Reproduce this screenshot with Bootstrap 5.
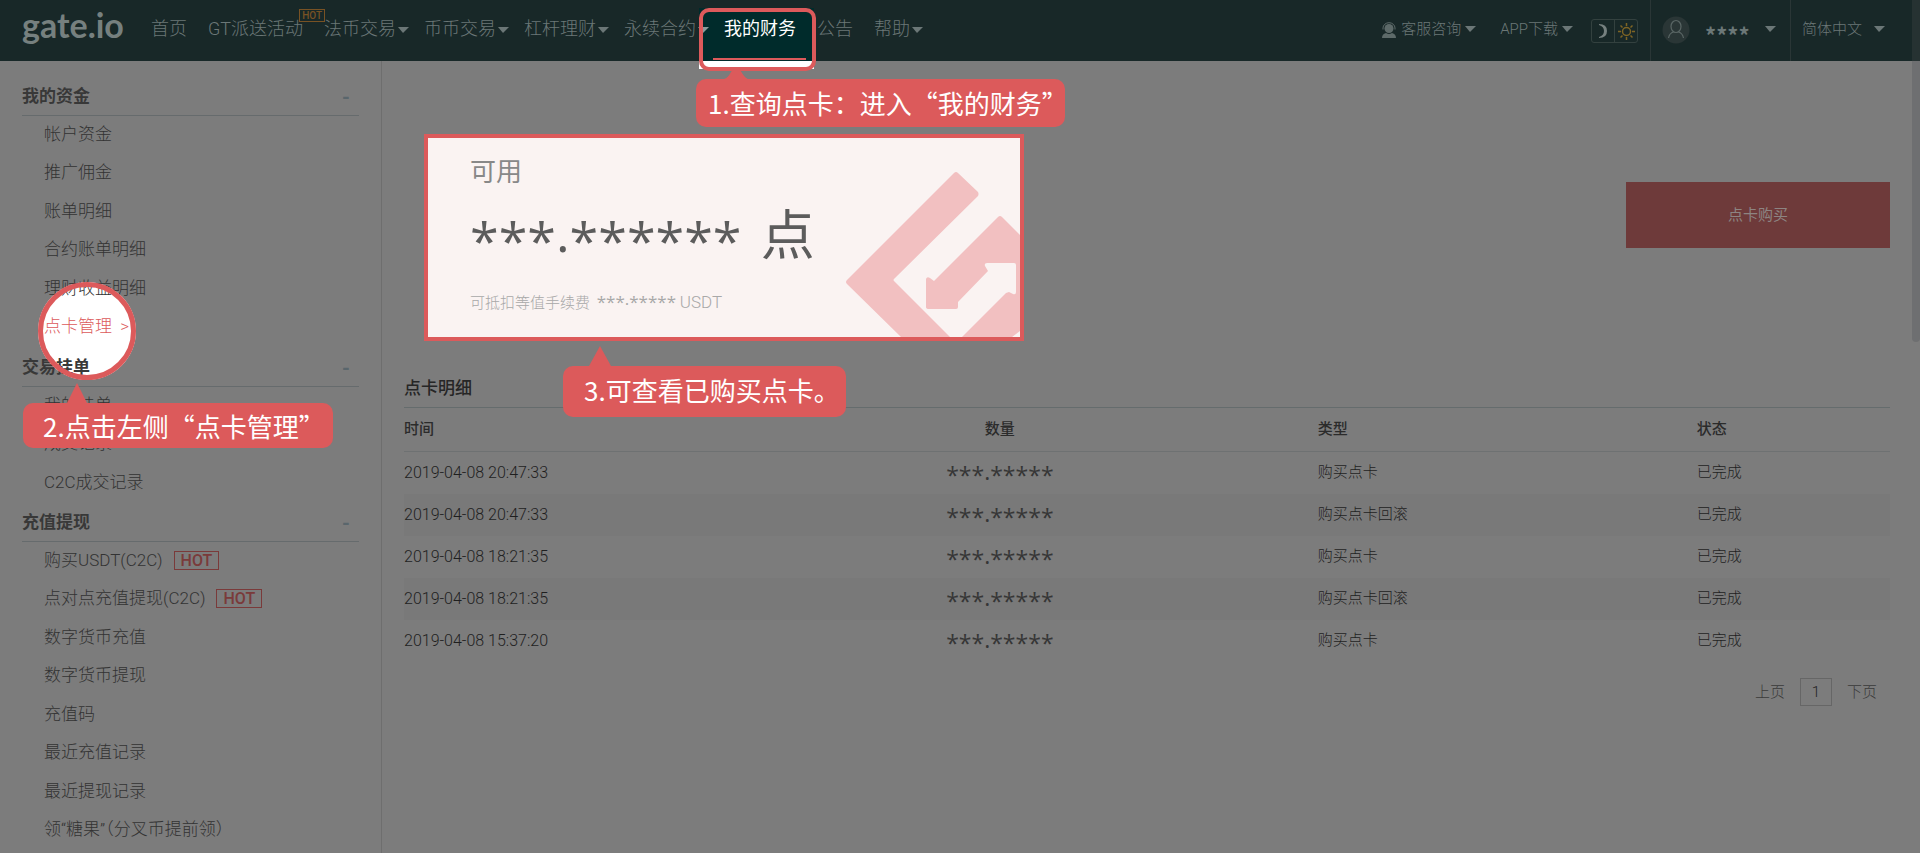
<!DOCTYPE html>
<html lang="zh-CN">
<head>
<meta charset="utf-8">
<meta name="viewport" content="width=device-width, initial-scale=1">
<title>gate.io 点卡管理</title>
<link href="https://cdn.jsdelivr.net/npm/bootstrap@5.3.0/dist/css/bootstrap.min.css" rel="stylesheet">
<style>
:root { --coral: #dc5a5b; --page: #7c7c7c; --bar: #182828; --rule: #6b6f70; }
body { background: var(--page); color: #1f1f1f; font-family: Roboto, "Noto Sans CJK SC", sans-serif; font-size: 15px; font-weight: 300; overflow: hidden; }
a { color: inherit; text-decoration: none; }
.shell { height: 100vh; overflow: hidden; }

/* top bar */
.topbar { height: 61px; background: var(--bar); color: #6b7777; padding: 0 8px 0 22px; }
.logo { font: 700 34px/50px Lato, sans-serif; color: #76807f; width: 129px; }
.menu { font-size: 18px; line-height: 58px; gap: 21px; height: 61px; }
.menu .has-sub { margin-right: -6px; }
.arrow { display: inline-block; border: 6px solid transparent; border-bottom: 0; border-top-color: currentColor; border-left-width: 5px; vertical-align: 2px; margin-left: 2px; }
.under-spot { position: relative; z-index: 1; }
.under-spot .arrow { border-top-color: #8a9c9c; }
.new-tag { position: absolute; right: -22px; top: 9px; border: 1px solid #785224; color: #785224; font: 500 10px/11px Roboto, sans-serif; padding: 0 2px; }
.tools { font-size: 15px; line-height: 58px; height: 61px; }
.tools .arrow { margin-left: 4px; }
.cell { height: 61px; border-left: 1px solid #2a3636; }
.modes { border: 1px solid #33413f; border-radius: 3px; height: 24px; margin: 19px 12px 0 2px; }
.modes button { border: 0; background: none; padding: 0; width: 22px; height: 22px; display: grid; place-items: center; }
.modes button + button { border-left: 1px solid #33413f; width: 23px; }
.user-cell { width: 140px; padding-left: 11px; }
.user-cell .face { margin: 16px 15px 0 0; flex: none; }
.user-cell .who { font: 700 22px/68px "Noto Sans CJK SC", sans-serif; width: 56px; }
.user-cell .arrow { margin-top: 26px; }
.lang { width: 122px; padding-left: 11px; }
.lang .arrow { margin-left: 12px; }

/* highlighted menu entry */
.spot { position: absolute; left: -25px; top: 8px; width: 117px; height: 63px; background: linear-gradient(#002b2b 53px, #fff 53px); background-size: 115px 61px; background-repeat: no-repeat; }
.spot-ring { position: absolute; inset: 0; border: 4px solid var(--coral); border-radius: 10px; z-index: 2; }
.spot-line { position: absolute; left: -11px; top: 58px; width: 93px; height: 2px; background: var(--coral); z-index: 2; }
.on-text { position: relative; z-index: 2; color: #fff; font-weight: 400; }

/* step callouts */
.callout-box { position: absolute; z-index: 5; background: var(--coral); color: #fff; border-radius: 10px; font-size: 26px; font-weight: 400; font-family: "Noto Sans CJK SC", sans-serif; white-space: nowrap; }
.callout-box svg { position: absolute; bottom: 100%; fill: var(--coral); }
.tip-1 { left: -28px; top: 79px; width: 369px; line-height: 48px; padding-left: 12px; }
.tip-1 svg { left: 28px; }
.tip-2 { left: 1px; top: 16px; width: 310px; line-height: 45px; padding-left: 20px; }
.tip-2 svg { left: 44px; }
.tip-3 { left: 181px; top: 305px; width: 283px; line-height: 47px; padding: 0 0 4px 21px; }
.tip-3 svg { left: 26px; }

/* side menu */
.side { width: 382px; border-right: 1px solid #6e6e6e; padding: 15px 22px 0; font-size: 17px; color: #333; }
.side h2 { font-size: 17px; font-weight: 700; line-height: 37px; padding-top: 2px; margin: 0; border-bottom: 1px solid #666b6d; color: #383838; }
.side h2 button { border: 0; background: none; color: #5a666c; font-weight: 700; font-size: 20px; line-height: 20px; padding: 0 9px 0 0; }
.side ul { list-style: none; margin: 0; padding-left: 22px; }
.side li { line-height: 36px; height: 38px; position: relative; }
.side li:nth-child(even) { height: 39px; }
.hot-tag { border: 1px solid #7a3a3a; color: #7a3a3a; font: 500 16px/17px Roboto, sans-serif; padding: 0 6px; margin-left: 11px; display: inline-block; }
.layered { isolation: isolate; }
.disc, .ring { position: absolute; left: -6px; top: -26px; width: 98px; height: 98px; border-radius: 50%; }
.disc { background: #fff; z-index: -1; }
.ring { border: 5px solid var(--coral); z-index: 3; }
.current { color: var(--coral); }

/* main column */
.content { padding: 73px 30px 0 22px; }
.points { width: 600px; height: 207px; margin-left: 20px; border: 4px solid var(--coral); background: #faf3f2; position: relative; padding: 14px 42px; }
.points .mark-art { position: absolute; right: 0; top: 0; }
.points .cap { font-size: 26px; line-height: 40px; color: #888; font-weight: 400; }
.points .sum { font-size: 54px; line-height: 90px; height: 76px; color: #5c5c5c; font-weight: 400; margin-bottom: 22px; }
.stars { font-family: "Open Sans", sans-serif; font-weight: 400; }
.stars span { vertical-align: .16em; line-height: 1; }
.points .sum .stars { font-size: 52px; display: inline-block; line-height: 96px; vertical-align: top; margin-right: 6px; }
.points .eq { color: #a8a8a8; line-height: 24px; }
.points .eq .stars { font-size: 17px; line-height: 24px; margin-left: 3px; }
.points .eq b { font-weight: 300; font-size: 17px; }
.buy { width: 264px; height: 66px; border: 0; border-radius: 0; background: #6e3a3a; color: #8d8482; font-size: 15px; font-weight: 400; margin-top: 48px; }
.content h1 { font-size: 17px; font-weight: 500; line-height: 38px; margin: 28px 0 0; border-bottom: 1px solid #656c6d; color: #262626; }
.log { width: 100%; table-layout: fixed; }
.log th { font-weight: 500; height: 43px; border-bottom: 1px solid #6e7172; color: #2b2b2b; padding: 0; }
.log td { height: 42px; padding: 0; }
.log td:first-child { font-size: 16px; }
.log tbody tr:nth-child(even) { background: #797979; }
.log .stars { font-size: 23px; line-height: 46px; display: block; height: 42px; color: #363636; }
.log .amount { text-align: center; }
.pages { gap: 15px; margin-top: 16px; padding-right: 13px; color: #3a3a3a; line-height: 28px; }
.pages .now { width: 32px; line-height: 26px; border: 1px solid #666; text-align: center; color: #222; }
.track { position: absolute; right: 0; top: 0; width: 8px; height: 342px; background: #6e6f71; border-radius: 0 0 4px 4px; }
.track::before { content: ""; display: block; height: 61px; background: #263232; }
</style>
</head>
<body>
<div class="shell d-flex flex-column position-relative">
<header class="topbar d-flex">
  <a class="logo flex-shrink-0" href="#">gate.io</a>
  <nav class="menu d-flex text-nowrap">
    <a href="#">首页</a>
    <a href="#" class="position-relative">GT派送活动<span class="new-tag">HOT</span></a>
    <a href="#" class="has-sub">法币交易<i class="arrow"></i></a>
    <a href="#" class="has-sub">币币交易<i class="arrow"></i></a>
    <a href="#" class="has-sub">杠杆理财<i class="arrow"></i></a>
    <a href="#" class="has-sub under-spot">永续合约<i class="arrow"></i></a>
    <div class="position-relative">
      <div class="spot"><div class="spot-ring"></div></div>
      <a href="#" class="on-text">我的财务</a>
      <div class="spot-line"></div>
      <div class="callout-box tip-1"><svg width="24" height="11" viewBox="0 0 24 11"><path d="M0 11Q4 10 7 4L10 0H15L18 5Q21 10 24 11Z"/></svg>1.查询点卡：进入“我的财务”</div>
    </div>
    <a href="#">公告</a>
    <a href="#" class="has-sub">帮助<i class="arrow"></i></a>
  </nav>
  <div class="tools d-flex ms-auto text-nowrap">
    <a href="#" class="me-4">
      <svg width="16" height="17" viewBox="0 0 16 17" fill="#5d6a69"><circle cx="8" cy="6.500" r="4.500"/><path d="M1 16q0-4 4-5Q8 13 11 11q4 1 4 5z"/><path d="M2 7.500V6a6 5.300 0 0 1 12 0v1.500" fill="none" stroke="#5d6a69"/></svg>
      客服咨询<i class="arrow"></i></a>
    <a href="#" class="me-3">APP下载<i class="arrow"></i></a>
    <div class="modes d-flex flex-shrink-0">
      <button aria-label="夜间"><svg width="12" height="16" viewBox="0 0 12 16" fill="#76807f"><path d="M2 1Q10 1 10 8T2 15V14Q7 12.500 7 8T2 2z"/></svg></button>
      <button aria-label="日间"><svg width="17" height="17" viewBox="0 0 17 17" fill="none" stroke="#7d6424" stroke-width="1.500"><circle cx="8.500" cy="8.500" r="4"/><path d="M8.500 0v3M8.500 14v3M0 8.500h3M14 8.500h3M2.500 2.500l2 2M12.500 12.500l2 2M14.500 2.500l-2 2M4.500 12.500l-2 2"/></svg></button>
    </div>
    <div class="cell user-cell d-flex"><svg class="face" width="28" height="28" viewBox="0 0 28 28"><circle cx="14" cy="14" r="13.500" fill="#2a3636"/><g fill="none" stroke="#5a6665" stroke-width="1.200"><ellipse cx="14" cy="10.500" rx="5" ry="6"/><path d="M6.500 22q1-5 5-6M21.500 22q-1-5-5-6"/></g></svg><span class="who">****</span><i class="arrow align-self-start"></i></div>
    <a href="#" class="cell lang">简体中文<i class="arrow"></i></a>
  </div>
</header>

<div class="d-flex flex-grow-1">
  <aside class="side flex-shrink-0">
    <div class="layered position-relative">
      <h2 class="d-flex justify-content-between align-items-center">我的资金<button aria-label="收起">-</button></h2>
      <ul>
        <li><a href="#">帐户资金</a></li>
        <li><a href="#">推广佣金</a></li>
        <li><a href="#">账单明细</a></li>
        <li><a href="#">合约账单明细</a></li>
        <li><a href="#">理财收益明细</a></li>
        <li><span class="disc"></span><a href="#" class="current">点卡管理&nbsp; &gt;</a><span class="ring"></span></li>
      </ul>
      <h2 class="d-flex justify-content-between align-items-center">交易挂单<button aria-label="收起">-</button></h2>
    </div>
    <div class="position-relative">
      <div class="callout-box tip-2"><svg width="20" height="20" viewBox="0 0 20 20"><path d="M0 20L10 0 20 20z"/></svg>2.点击左侧“点卡管理”</div>
      <ul>
        <li><a href="#">我的挂单</a></li>
        <li><a href="#">成交记录</a></li>
        <li><a href="#">C2C成交记录</a></li>
      </ul>
    </div>
    <h2 class="d-flex justify-content-between align-items-center">充值提现<button aria-label="收起">-</button></h2>
    <ul>
      <li><a href="#">购买USDT(C2C)<span class="hot-tag">HOT</span></a></li>
      <li><a href="#">点对点充值提现(C2C)<span class="hot-tag">HOT</span></a></li>
      <li><a href="#">数字货币充值</a></li>
      <li><a href="#">数字货币提现</a></li>
      <li><a href="#">充值码</a></li>
      <li><a href="#">最近充值记录</a></li>
      <li><a href="#">最近提现记录</a></li>
      <li><a href="#">领“糖果”（分叉币提前领）</a></li>
    </ul>
  </aside>

  <main class="content flex-grow-1 position-relative">
    <div class="d-flex justify-content-between align-items-start">
      <section class="points">
        <svg class="mark-art" width="174" height="199" viewBox="846 138 174 199" fill="#f2c0c1"><path d="M954 173q2-2 4 0l20 19q1 2 0 4L894 279q-1 1 0 2l56 56H901L847 284q-2-2 0-4z"/><path d="M998 217q2-2 4 0l18 18V331L1012 337H962L1006 293 1009 292 1013 294Q1016 295 1016 292V265Q1016 263 1014 263H987Q984 263 985 266L988 271 958 302V307Q958 309 956 309H929Q926 309 926 307V279Q927 276 930 278L934 281z"/></svg>
        <div class="cap">可用</div>
        <div class="sum text-nowrap"><span class="stars">***<span>.</span>******</span> 点</div>
        <div class="eq">可抵扣等值手续费 <span class="stars">***<span>.</span>*****</span> <b>USDT</b></div>
      </section>
      <button class="btn buy">点卡购买</button>
    </div>
    <h1>点卡明细</h1>
    <table class="log">
      <colgroup><col style="width:18.7%"><col style="width:42.8%"><col style="width:25.5%"><col style="width:13%"></colgroup>
      <thead><tr><th>时间</th><th class="amount">数量</th><th>类型</th><th>状态</th></tr></thead>
      <tbody>
        <tr><td>2019-04-08 20:47:33</td><td class="amount"><span class="stars">***<span>.</span>*****</span></td><td>购买点卡</td><td>已完成</td></tr>
        <tr><td>2019-04-08 20:47:33</td><td class="amount"><span class="stars">***<span>.</span>*****</span></td><td>购买点卡回滚</td><td>已完成</td></tr>
        <tr><td>2019-04-08 18:21:35</td><td class="amount"><span class="stars">***<span>.</span>*****</span></td><td>购买点卡</td><td>已完成</td></tr>
        <tr><td>2019-04-08 18:21:35</td><td class="amount"><span class="stars">***<span>.</span>*****</span></td><td>购买点卡回滚</td><td>已完成</td></tr>
        <tr><td>2019-04-08 15:37:20</td><td class="amount"><span class="stars">***<span>.</span>*****</span></td><td>购买点卡</td><td>已完成</td></tr>
      </tbody>
    </table>
    <nav class="pages d-flex justify-content-end"><a href="#">上页</a><a href="#" class="now">1</a><a href="#">下页</a></nav>
    <div class="callout-box tip-3"><svg width="22" height="20" viewBox="0 0 22 20"><path d="M0 20L11 0 22 20z"/></svg>3.可查看已购买点卡。</div>
  </main>
</div>
<div class="track"></div>
</div>
<script src="https://cdn.jsdelivr.net/npm/bootstrap@5.3.0/dist/js/bootstrap.bundle.min.js"></script>
</body>
</html>
